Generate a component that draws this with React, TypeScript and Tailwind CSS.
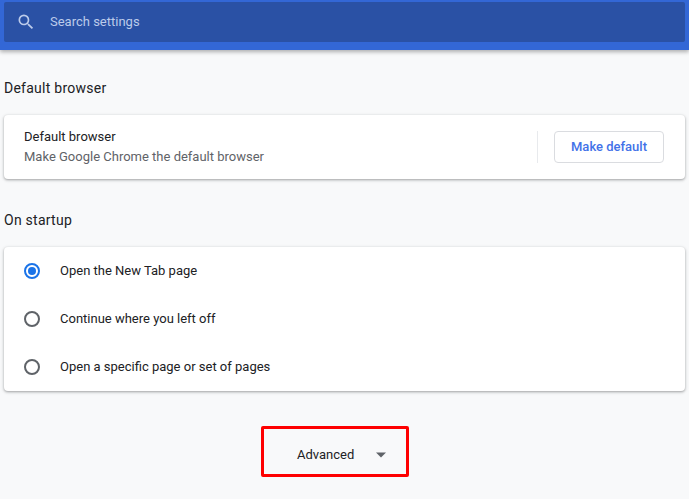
import React from "react";

function Radio({ checked }: { checked?: boolean }) {
  return (
    <span className={`flex h-4 w-4 shrink-0 items-center justify-center rounded-full border-2 ${checked ? "border-[#1a73e8]" : "border-[#5f6368]"}`}>
      {checked && <span className="h-2 w-2 rounded-full bg-[#1a73e8]" />}
    </span>
  );
}

function Row({ label, checked }: { label: string; checked?: boolean }) {
  return (
    <div className="flex h-12 items-center gap-5 pl-5">
      <Radio checked={checked} />
      <span className="text-[13px] text-[#202124]">{label}</span>
    </div>
  );
}

const cardClass = "mx-1 rounded-[4px] bg-white shadow-[0_1px_2px_rgba(60,64,67,0.3),0_1px_3px_1px_rgba(60,64,67,0.15)]";

export default function App() {
  return (
    <div className="h-[499px] w-[689px] overflow-hidden bg-[#f8f9fa] font-['Roboto',sans-serif]">
      <header className="h-[50px] bg-[#3367d6] px-1 pt-[2px] shadow-[0_2px_4px_rgba(0,0,0,0.3)]">
        <div className="flex h-10 items-center rounded-[2px] bg-[#2a51a5]">
          <svg className="ml-[12px] h-[20px] w-[20px]" viewBox="0 0 24 24" fill="#bccbea">
            <path d="M15.5 14h-.79l-.28-.27A6.471 6.471 0 0 0 16 9.5 6.5 6.5 0 1 0 9.5 16c1.61 0 3.09-.59 4.23-1.57l.27.28v.79l5 4.99L20.49 19l-4.99-5zm-6 0C7.01 14 5 11.99 5 9.5S7.01 5 9.5 5 14 7.01 14 9.5 11.99 14 9.5 14z" />
          </svg>
          <span className="ml-[14px] text-[13px] text-[#bccbea]">Search settings</span>
        </div>
      </header>

      <h2 className="mx-1 mt-[29px] text-[14px] leading-[18px] font-normal tracking-[0.25px] text-[#202124]">Default browser</h2>
      <section className={`${cardClass} mt-[18px] flex h-16 items-center pr-[21px] pl-5`}>
        <div className="flex-1">
          <div className="text-[13px] leading-[20px] text-[#202124]">Default browser</div>
          <div className="text-[13px] leading-[20px] text-[#5f6368]">Make Google Chrome the default browser</div>
        </div>
        <div className="h-8 w-px bg-[#e8eaed]" />
        <button className="ml-4 h-8 w-[110px] rounded-[4px] border border-[#dadce0] bg-white text-[13px] font-medium text-[#4272e8]">Make default</button>
      </section>

      <h2 className="mx-1 mt-[32px] text-[14px] leading-[18px] font-normal tracking-[0.25px] text-[#202124]">On startup</h2>
      <section className={`${cardClass} mt-[18px]`}>
        <Row label="Open the New Tab page" checked />
        <Row label="Continue where you left off" />
        <Row label="Open a specific page or set of pages" />
      </section>

      <div className="mt-[35px] flex justify-center pr-[19px]">
        <div className="flex h-[51px] w-[148px] items-center rounded-[2px] border-[3px] border-[#fe0000] pt-[7px] pl-[33px]">
          <span className="text-[13px] text-[#202124]">Advanced</span>
          <svg className="ml-[22px] h-[6px] w-[10px]" viewBox="0 0 10 6" fill="#5f6368">
            <path d="M0 .5h10L5 5.5z" />
          </svg>
        </div>
      </div>
    </div>
  );
}
